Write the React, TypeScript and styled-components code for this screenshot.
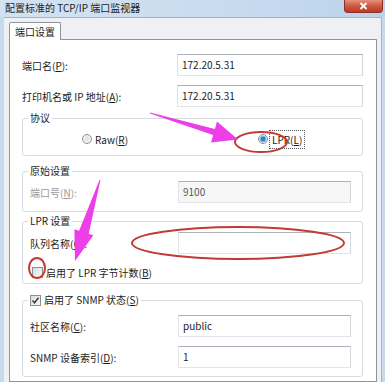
import React from "react";
import styled, {createGlobalStyle} from "styled-components";

const GlobalStyle = createGlobalStyle`
  html, body {
    margin: 0;
    padding: 0;
    background: #ffffff;
  }
`

const Window = styled.div`
  position: relative;
  width: 385px;
  height: 382px;
  overflow: hidden;
  display: flex;
  flex-direction: column;
  background: #c7daee;
  font-family: "Noto Sans CJK SC", "Noto Sans", sans-serif;
  font-size: 10px;
  color: #1c1c1c;
`

const TitleBar = styled.div`
  height: 17px;
  flex: none;
  display: flex;
  align-items: flex-start;
  justify-content: space-between;
  padding-left: 5px;
  padding-right: 2px;
  background: linear-gradient(90deg, #d3e2f2 0%, #c9dcef 55%, #bcd3ec 100%);
`

const Title = styled.div`
  line-height: 16px;
  font-size: 10px;
  color: #222;
`

const CloseButton = styled.div`
  width: 37px;
  height: 12px;
  display: flex;
  align-items: center;
  justify-content: center;
  border: 1px solid #8b3226;
  border-top: none;
  border-radius: 0 0 4px 4px;
  background: linear-gradient(#e3907f 0%, #cf5742 50%, #bd3a26 100%);
`

const Client = styled.div`
  flex: 1;
  display: flex;
  flex-direction: column;
  margin: 0 3px 0 4px;
  padding: 4px 4px 0 5px;
  border-top: 1px solid #9fb3c9;
  border-right: 1px solid #a8b4c0;
  background: #eef0f3;
  min-height: 0;
`

const TabStrip = styled.div`
  display: flex;
  height: 17px;
  flex: none;
`

const Tab = styled.div`
  padding: 0 5px;
  line-height: 17px;
  background: #ffffff;
  border: 1px solid #8e949c;
  border-bottom: none;
  border-radius: 2px 2px 0 0;
  margin-bottom: -1px;
  position: relative;
  z-index: 1;
`

const Panel = styled.div`
  flex: 1;
  display: flex;
  flex-direction: column;
  background: #ffffff;
  border: 1px solid #8e949c;
  padding: 14px 13px 0 12px;
  min-height: 0;
`

const Row = styled.div<{ $mt?: number }>`
  display: flex;
  align-items: center;
  height: 22px;
  flex: none;
  margin-top: ${p => p.$mt ?? 0}px;
`

const Label = styled.div<{ $disabled?: boolean }>`
  flex: 1;
  white-space: nowrap;
  color: ${p => p.$disabled ? "#9a9a9a" : "#1c1c1c"};
`

const Field = styled.div<{ $disabled?: boolean; $w?: number }>`
  width: ${p => p.$w ?? 186}px;
  height: 22px;
  box-sizing: border-box;
  flex: none;
  padding-left: 4px;
  line-height: 20px;
  border: 1px solid #e0e5ea;
  border-top-color: #aeb2b8;
  border-right-color: #d3d8de;
  background: ${p => p.$disabled ? "#f6f6f6" : "#ffffff"};
  color: ${p => p.$disabled ? "#555" : "#1c1c1c"};
`

const Group = styled.fieldset<{ $mt?: number; $pt?: number; $pb?: number }>`
  margin: ${p => p.$mt ?? 0}px 0 0 0;
  padding: ${p => p.$pt ?? 4}px 11px ${p => p.$pb ?? 8}px 7px;
  border: 1px solid #d6dbe0;
  border-radius: 3px;
  flex: none;
  min-width: 0;
`

const Legend = styled.legend`
  padding: 0 2px;
  margin-left: -2px;
  line-height: 14px;
  display: flex;
  align-items: center;
  gap: 3px;
`

const RadioRow = styled.div`
  display: grid;
  grid-template-columns: 176px auto;
  padding-left: 52px;
  height: 16px;
  align-items: center;
`

const Choice = styled.label`
  display: flex;
  align-items: center;
  gap: 3px;
  white-space: nowrap;
`

const RadioDot = styled.span<{ $on?: boolean }>`
  width: 10px;
  height: 10px;
  box-sizing: border-box;
  border-radius: 50%;
  border: 1px solid #8e8f8f;
  background: ${p => p.$on
    ? "radial-gradient(circle, #2f86c8 0 2.2px, #7bbbe6 2.6px 3.4px, #eef3f7 3.6px)"
    : "radial-gradient(circle, #dcdcdc 0, #f4f4f4 4px)"};
`

const Focus = styled.span`
  outline: 1px dotted #555;
  outline-offset: 1px;
  padding: 0 1px;
`

const Box = styled.span<{ $on?: boolean }>`
  width: 11px;
  height: 11px;
  box-sizing: border-box;
  border: 1px solid #8e8f8f;
  background: linear-gradient(135deg, #dcdcdc, #f7f7f7);
  display: flex;
  align-items: center;
  justify-content: center;
`

const CheckRow = styled.div<{ $mt?: number }>`
  display: flex;
  align-items: center;
  gap: 3px;
  height: 16px;
  margin-top: ${p => p.$mt ?? 0}px;
  padding-left: 2px;
`

const Overlay = styled.svg`
  position: absolute;
  left: 0;
  top: 0;
  pointer-events: none;
`

function Check() {
    return (
        <svg width="9" height="9" viewBox="0 0 9 9">
            <path d="M1.5 4.5 L3.5 6.8 L7.5 1.8" fill="none" stroke="#3a3a3a" strokeWidth="1.4"/>
        </svg>
    );
}

export default function App() {
    return (
        <Window>
            <GlobalStyle/>
            <TitleBar>
                <Title>配置标准的 TCP/IP 端口监视器</Title>
                <CloseButton>
                    <svg width="9" height="8" viewBox="0 0 9 8">
                        <path d="M1.5 1 L7.5 7 M7.5 1 L1.5 7" stroke="#ffffff" strokeWidth="1.8"/>
                    </svg>
                </CloseButton>
            </TitleBar>
            <Client>
                <TabStrip>
                    <Tab>端口设置</Tab>
                </TabStrip>
                <Panel>
                    <Row>
                        <Label>端口名(<u>P</u>):</Label>
                        <Field>172.20.5.31</Field>
                    </Row>
                    <Row $mt={9}>
                        <Label>打印机名或 IP 地址(<u>A</u>):</Label>
                        <Field>172.20.5.31</Field>
                    </Row>

                    <Group $mt={4} $pt={6} $pb={8}>
                        <Legend>协议</Legend>
                        <RadioRow>
                            <Choice><RadioDot/><span>Raw(<u>R</u>)</span></Choice>
                            <Choice><RadioDot $on/><Focus>LPR(<u>L</u>)</Focus></Choice>
                        </RadioRow>
                    </Group>

                    <Group $mt={8} $pt={3} $pb={8}>
                        <Legend>原始设置</Legend>
                        <Row>
                            <Label $disabled>端口号(<u>N</u>):</Label>
                            <Field $disabled $w={173}>9100</Field>
                        </Row>
                    </Group>

                    <Group $mt={2} $pt={4} $pb={3}>
                        <Legend>LPR 设置</Legend>
                        <Row>
                            <Label>队列名称(<u>Q</u>):</Label>
                            <Field $w={173}/>
                        </Row>
                        <CheckRow $mt={10}>
                            <Box/>
                            <span>启用了 LPR 字节计数(<u>B</u>)</span>
                        </CheckRow>
                    </Group>

                    <Group $mt={9} $pt={8} $pb={8}>
                        <Legend>
                            <Box $on><Check/></Box>
                            <span>启用了 SNMP 状态(<u>S</u>)</span>
                        </Legend>
                        <Row>
                            <Label>社区名称(<u>C</u>):</Label>
                            <Field $w={173}>public</Field>
                        </Row>
                        <Row $mt={9}>
                            <Label>SNMP 设备索引(<u>D</u>):</Label>
                            <Field $w={173}>1</Field>
                        </Row>
                    </Group>
                </Panel>
            </Client>

            <Overlay width="385" height="382" viewBox="0 0 385 382">
                <g fill="none" stroke="#c23a35" strokeWidth="2">
                    <ellipse cx="261" cy="142" rx="26" ry="10"/>
                    <ellipse cx="238" cy="243" rx="106" ry="16"/>
                    <ellipse cx="37" cy="268" rx="8" ry="10"/>
                </g>
                <g fill="#ee3ee8">
                    <polygon points="150,112.5 150,113.5 213.1,134.9 211,142.5 238,139.5 217,121.5 214.9,129.1"/>
                    <polygon points="99.5,180 100.5,180 88.7,233.8 93.4,235.2 75,261 74.4,229.3 79.1,230.8"/>
                </g>
            </Overlay>
        </Window>
    );
}
